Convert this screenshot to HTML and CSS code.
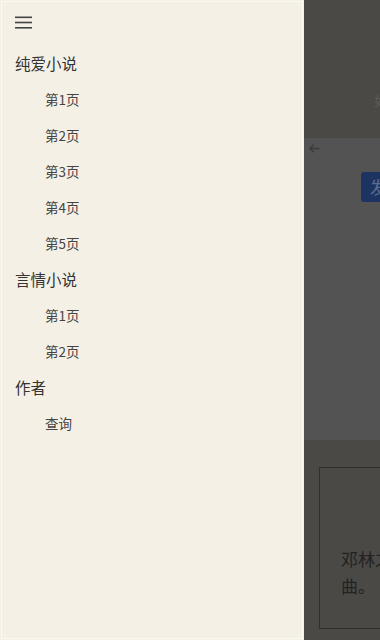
FILE: index.html
```html
<!DOCTYPE html>
<html lang="zh">
<head>
<meta charset="utf-8">
<title>Drawer</title>
<link rel="stylesheet" href="styles.css">
</head>
<body>
<div class="app">
  <nav class="drawer">
    <div class="menu-row">
      <svg class="hamburger" width="17" height="13" viewBox="0 0 17 13">
        <rect x="0" y="0.5" width="17" height="1.6" fill="#444"/>
        <rect x="0" y="5.7" width="17" height="1.6" fill="#444"/>
        <rect x="0" y="11" width="17" height="1.6" fill="#444"/>
      </svg>
    </div>
    <ul class="nav">
      <li class="group">纯爱小说</li>
      <li class="item">第1页</li>
      <li class="item">第2页</li>
      <li class="item">第3页</li>
      <li class="item">第4页</li>
      <li class="item">第5页</li>
      <li class="group">言情小说</li>
      <li class="item">第1页</li>
      <li class="item">第2页</li>
      <li class="group">作者</li>
      <li class="item">查询</li>
    </ul>
  </nav>
  <main class="main">
    <header class="top">
      <span class="title">如</span>
    </header>
    <section class="band">
      <svg class="back" width="11" height="9" viewBox="0 0 11 9">
        <path d="M10.5 4.5H1.2M4.8 0.8L1 4.5l3.8 3.7" fill="none" stroke="#3a3a3a" stroke-width="1.3"/>
      </svg>
      <div class="btn-row"><span class="btn">发</span></div>
    </section>
    <section class="lower">
      <div class="card">
        <p class="card-text">邓林之<br>曲。</p>
      </div>
    </section>
  </main>
</div>
</body>
</html>
```

FILE: styles.css
```css
html, body {
  margin: 0;
  padding: 0;
  height: 100%;
}
body {
  font-family: "Noto Sans CJK SC", "Noto Sans", sans-serif;
  background: #4a4945;
  overflow: hidden;
}
.app {
  display: flex;
  width: 380px;
  height: 640px;
}
.drawer {
  width: 304px;
  flex: none;
  height: 640px;
  background: #f4f0e6;
  box-shadow: inset 0 0 0 1px #f4f0e6, inset 0 0 0 2px #fbf9f1;
  box-sizing: border-box;
}
.menu-row {
  height: 45px;
  display: flex;
  align-items: flex-start;
  padding: 16px 0 0 15px;
  box-sizing: border-box;
}
.hamburger {
  display: block;
}
.nav {
  list-style: none;
  margin: 0;
  padding: 0;
}
.group {
  height: 36px;
  line-height: 36px;
  padding-left: 15px;
  font-size: 15.5px;
  color: #333;
}
.item {
  height: 36px;
  line-height: 36px;
  padding-left: 45px;
  font-size: 13.5px;
  color: #444;
}
.main {
  flex: 1;
  min-width: 0;
  overflow: hidden;
  display: flex;
  flex-direction: column;
  height: 640px;
}
.top {
  height: 138px;
  flex: none;
  background: #4a4945;
  position: relative;
}
.title {
  position: absolute;
  left: 70px;
  top: 91px;
  font-size: 14px;
  line-height: 18px;
  color: #5c5b57;
  white-space: nowrap;
}
.band {
  height: 302px;
  flex: none;
  background: #535353;
  padding: 6px 0 0 5px;
  box-sizing: border-box;
}
.back {
  display: block;
}
.btn-row {
  margin-top: 19px;
  padding-left: 52px;
  display: flex;
}
.btn {
  display: block;
  width: 60px;
  height: 30px;
  line-height: 30px;
  padding-left: 9px;
  background: #1d3463;
  border-radius: 3px;
  color: #5d6d8f;
  font-size: 17px;
  white-space: nowrap;
}
.lower {
  flex: 1;
  background: #4a4945;
  padding: 27px 0 11px 15px;
  box-sizing: border-box;
  display: flex;
}
.card {
  flex: 1;
  border: 1px solid #2f2f2d;
  border-right: none;
  display: flex;
  align-items: flex-end;
  padding: 0 0 29px 21px;
}
.card-text {
  margin: 0;
  font-size: 17px;
  line-height: 27px;
  color: #222;
  white-space: nowrap;
}
```
